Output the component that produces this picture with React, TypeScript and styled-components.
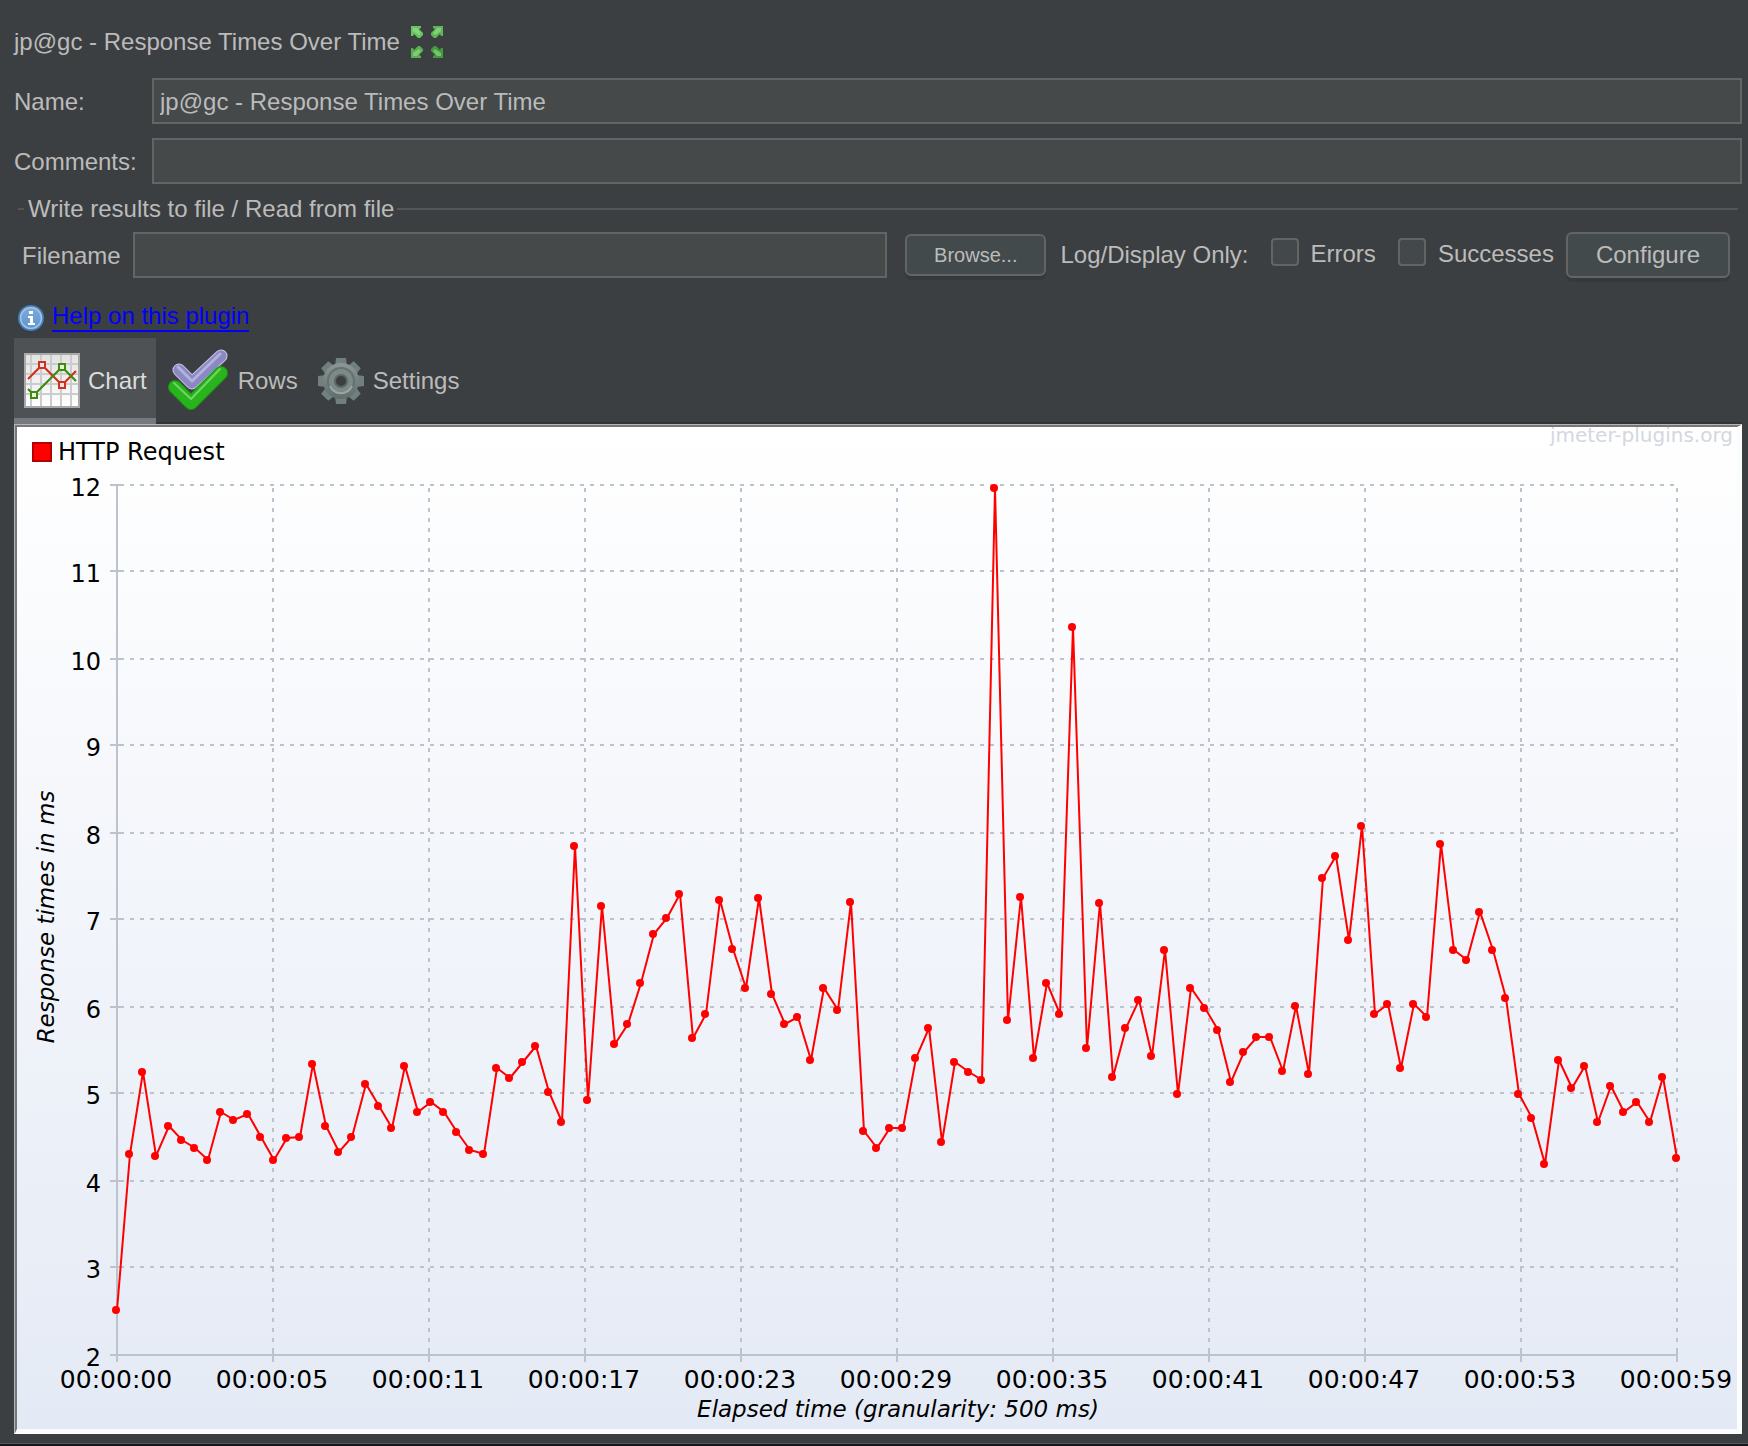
import React, { useState } from "react";
import styled, { createGlobalStyle } from "styled-components";

const GlobalStyle = createGlobalStyle`
  *, *::before, *::after { box-sizing: border-box; }
  body {
    margin: 0;
    background: #3c3f41;
    color: #bbbbbb;
    font-family: "Liberation Sans", Arial, sans-serif;
    font-size: 24px;
    line-height: 28px;
  }
`;

const Page = styled.main`
  min-height: 100vh;
  display: flex;
  flex-direction: column;
  padding: 26px 6px 8px 14px;
  border-bottom: 2px solid #17141d;
  box-shadow: inset 0 -1px 0 #55585a;
`;

const TitleBar = styled.header`
  display: flex;
  align-items: center;
  gap: 11px;
  height: 32px;
  margin-bottom: 20px;
`;

const Title = styled.h1`
  margin: 0;
  font-size: 24px;
  font-weight: 400;
  line-height: 28px;
`;

const IconButton = styled.button`
  display: flex;
  padding: 0;
  border: 0;
  background: none;
`;

const FormRow = styled.div`
  display: grid;
  grid-template-columns: 138px 1fr;
  align-items: center;
  margin-bottom: 14px;
`;

const FieldLabel = styled.label`
  padding-top: 2px;
`;

const TextField = styled.input`
  width: 100%;
  min-width: 0;
  height: 46px;
  padding: 2px 6px 0;
  border: 2px solid #646464;
  border-radius: 0;
  background: #45494a;
  color: #bbbbbb;
  font: inherit;
  outline: none;
`;

const FileGroup = styled.fieldset`
  min-width: 0;
  margin: 0 4px 0 4px;
  padding: 12px 8px 0 4px;
  border: 0;
  border-top: 2px solid #555555;
`;

const GroupTitle = styled.legend`
  margin-left: 2px;
  padding: 0 3px 0 4px;
  line-height: 22px;
`;

const FileRow = styled.div`
  display: flex;
  align-items: center;
  gap: 12px;
  white-space: nowrap;
`;

const FileField = styled(TextField)`
  flex: 1;
  margin-right: 6px;
`;

const Button = styled.button<{ $compact?: boolean }>`
  height: ${(p) => (p.$compact ? 42 : 46)}px;
  padding: 0 ${(p) => (p.$compact ? 27 : 28)}px;
  border: 2px solid #646464;
  border-radius: 6px;
  background: #434a4c;
  box-shadow: 0 4px 0 #36393b;
  color: #bbbbbb;
  font-family: inherit;
  font-size: ${(p) => (p.$compact ? 20 : 24)}px;
`;

const Caption = styled.span`
  margin-left: 2px;
`;

const Check = styled.label`
  display: flex;
  align-items: center;
  gap: 12px;
  margin-left: 10px;
  padding-bottom: 2px;
`;

const CheckBox = styled.input`
  appearance: none;
  width: 28px;
  height: 28px;
  margin: 0 0 4px;
  border: 2px solid #646464;
  border-radius: 4px;
  background: #43494a;
  &:checked { background: #8a9296; }
`;

const HelpRow = styled.div`
  display: flex;
  align-items: center;
  gap: 7px;
  margin: 26px 0 6px 3px;
`;

const HelpLink = styled.a`
  padding-bottom: 2px;
  border-bottom: 2px solid #0000ff;
  color: #0000ff;
  line-height: 24px;
  text-decoration: none;
`;

const TabList = styled.div`
  display: flex;
  height: 86px;
  box-shadow: inset 0 -2px 0 #323537;
`;

const Tab = styled.button<{ $active: boolean }>`
  display: flex;
  align-items: center;
  gap: 8px;
  padding: 0 9px 0 10px;
  border: 0;
  background: ${(p) => (p.$active ? "#4e5254" : "transparent")};
  box-shadow: ${(p) => (p.$active ? "inset 0 -6px 0 #747a80" : "none")};
  color: ${(p) => (p.$active ? "#dcdcdc" : "#bbbbbb")};
  font: inherit;
`;

const Bevel = styled.section`
  border: 1px solid #ffffff;
  border-top-color: #b4b4b4;
  border-left-color: #b4b4b4;
`;

const BevelInner = styled.div`
  border-style: solid;
  border-width: 2px 4px 4px 2px;
  border-color: #777777 #fbfcfe #fbfcfe #777777;
`;

const ChartSvg = styled.svg`
  display: block;
  width: 100%;
  height: auto;
  background: linear-gradient(#ffffff, #e4eaf5);
  font-family: "DejaVu Sans", sans-serif;
  font-size: 24px;
`;

const TimeLabel = styled.text`
  font-size: 25px;
`;

const AxisTitle = styled.text`
  font-size: 23px;
  font-style: italic;
`;

const Watermark = styled.text`
  font-size: 20px;
  fill: #d3d7df;
`;

const RESPONSE_TIMES = [
  2.52, 4.31, 5.25, 4.29, 4.63, 4.47, 4.38, 4.24, 4.79, 4.7, 4.77, 4.51, 4.24, 4.49, 4.51,
  5.34, 4.63, 4.33, 4.51, 5.11, 4.86, 4.61, 5.32, 4.79, 4.91, 4.79, 4.56, 4.36, 4.31, 5.3,
  5.18, 5.37, 5.55, 5.02, 4.68, 7.85, 4.93, 7.16, 5.57, 5.8, 6.28, 6.84, 7.02, 7.3, 5.64,
  5.92, 7.23, 6.67, 6.22, 7.25, 6.15, 5.8, 5.89, 5.39, 6.22, 5.96, 7.21, 4.58, 4.38, 4.61,
  4.61, 5.41, 5.76, 4.45, 5.37, 5.25, 5.16, 11.97, 5.85, 7.27, 5.41, 6.28, 5.92, 10.37, 5.53,
  7.2, 5.2, 5.76, 6.08, 5.44, 6.65, 5.0, 6.22, 5.99, 5.74, 5.14, 5.48, 5.66, 5.66, 5.27,
  6.01, 5.23, 7.48, 7.73, 6.77, 8.08, 5.92, 6.03, 5.3, 6.03, 5.89, 7.87, 6.65, 6.54, 7.09,
  6.65, 6.1, 5.0, 4.72, 4.2, 5.39, 5.07, 5.32, 4.68, 5.09, 4.79, 4.91, 4.68, 5.2, 4.26,
];

const TIME_LABELS = ["00", "05", "11", "17", "23", "29", "35", "41", "47", "53", "59"];
const MS_LABELS = [2, 3, 4, 5, 6, 7, 8, 9, 10, 11, 12];

const PLOT = { left: 100, right: 1660, top: 58, bottom: 928 };
const GRID = "#bcc2ce";

const toX = (i: number) =>
  Math.floor(PLOT.left + (i * (PLOT.right - PLOT.left)) / (RESPONSE_TIMES.length - 1));
const toY = (ms: number) => Math.round(PLOT.bottom - (ms - 2) * 87);
const gridY = (ms: number) => Math.floor(toY(ms) / 2) * 2;

function ResponseChart() {
  const line = RESPONSE_TIMES.map((ms, i) => `${toX(i)},${toY(ms)}`).join(" ");
  return (
    <ChartSvg viewBox="0 0 1720 1002" role="img" aria-label="Response times over time">
      <rect x="16" y="16" width="18" height="18" fill="#ff0000" stroke="#b20000" strokeWidth="2" />
      <text x="41" y="33">HTTP Request</text>
      <Watermark x="1716" y="15" textAnchor="end">jmeter-plugins.org</Watermark>
      <g stroke={GRID} strokeWidth="2">
        {MS_LABELS.map((ms) => (
          <g key={ms}>
            <line x1="93" x2="107" y1={gridY(ms)} y2={gridY(ms)} />
            {ms > 2 && (
              <line x1="103" x2={PLOT.right} y1={gridY(ms)} y2={gridY(ms)} strokeDasharray="4 6" />
            )}
          </g>
        ))}
        {TIME_LABELS.map((t, i) => {
          const x = PLOT.left + i * 156;
          return (
            <g key={t}>
              <line x1={x} x2={x} y1="921" y2="935" />
              {i > 0 && <line x1={x} x2={x} y1="61" y2={PLOT.bottom} strokeDasharray="4 6" />}
            </g>
          );
        })}
        <line x1={PLOT.left} x2={PLOT.left} y1={PLOT.top} y2={PLOT.bottom} />
        <line x1={PLOT.left} x2={PLOT.right} y1={PLOT.bottom} y2={PLOT.bottom} />
      </g>
      {MS_LABELS.map((ms) => (
        <text key={ms} x="84" y={gridY(ms) + 11} textAnchor="end">{ms}</text>
      ))}
      {TIME_LABELS.map((t, i) => (
        <TimeLabel key={t} x={PLOT.left - 1 + i * 156} y="961" textAnchor="middle">{`00:00:${t}`}</TimeLabel>
      ))}
      <AxisTitle x="881" y="990" textAnchor="middle">Elapsed time (granularity: 500 ms)</AxisTitle>
      <AxisTitle transform="translate(37 490) rotate(-90)" textAnchor="middle">Response times in ms</AxisTitle>
      <polyline points={line} fill="none" stroke="#ff0000" strokeWidth="2" />
      <g fill="#ff0000">
        {RESPONSE_TIMES.map((ms, i) => (
          <circle key={i} cx={toX(i) - 1} cy={toY(ms)} r="4" />
        ))}
      </g>
    </ChartSvg>
  );
}

const ARROW = "M0 0H5V1L4 1.5L6 3.5V4.5L4.5 6H3.5L1.5 4L1 5H0Z";

function ExpandIcon() {
  return (
    <svg width="32" height="32" viewBox="0 0 16 16" aria-hidden="true">
      {[
        ["", "#67c45f"],
        ["translate(16 0) scale(-1 1)", "#5cb655"],
        ["translate(0 16) scale(1 -1)", "#57b04f"],
        ["translate(16 16) scale(-1 -1)", "#429c3d"],
      ].map(([transform, fill]) => (
        <g key={transform} transform={transform}>
          <path d={ARROW} fill={fill} />
          <path d="M1 1H3L5 3.5L4 4.5L1 2.5Z" fill="#a4e09a" opacity="0.55" />
        </g>
      ))}
    </svg>
  );
}

function InfoIcon() {
  return (
    <svg width="28" height="28" viewBox="0 0 28 28" aria-hidden="true">
      <defs>
        <linearGradient id="info" x1="0" y1="0" x2="0" y2="1">
          <stop offset="0" stopColor="#7fa9d8" />
          <stop offset="1" stopColor="#5f96cf" />
        </linearGradient>
      </defs>
      <circle cx="14" cy="14" r="13" fill="#3f7fbd" />
      <circle cx="14" cy="14" r="10.5" fill="url(#info)" stroke="#a4c3e2" strokeWidth="1.6" />
      <path d="M12 7h4v3h-4zM11 12h5v7h2v2h-7v-2h2v-5h-2z" fill="#ffffff" />
    </svg>
  );
}

function ChartIcon() {
  return (
    <svg width="56" height="56" viewBox="0 0 56 56" aria-hidden="true">
      <defs>
        <linearGradient id="paper" x1="0" y1="0" x2="0" y2="1">
          <stop offset="0" stopColor="#e2e2e2" />
          <stop offset="1" stopColor="#ffffff" />
        </linearGradient>
      </defs>
      <rect x="1" y="1" width="54" height="53" fill="url(#paper)" stroke="#a9a9a9" strokeWidth="2" />
      <path d="M7 2V53M17 2V53M27 2V53M37 2V53M47 2V53M2 11H54M2 21H54M2 31H54M2 41H54" stroke="#cccccc" strokeWidth="2" />
      <path d="M4 26L18 12L38 32L52 18" fill="none" stroke="#d03020" strokeWidth="2.2" />
      <path d="M4 36L10 42L38 14L52 28" fill="none" stroke="#3f8a10" strokeWidth="2.2" />
      <g fill="#fde4e0" stroke="#d03020" strokeWidth="2">
        <rect x="15" y="9" width="6" height="6" />
        <rect x="35" y="29" width="6" height="6" />
      </g>
      <g fill="#e2fbd0" stroke="#3f8a10" strokeWidth="2">
        <rect x="7" y="39" width="6" height="6" />
        <rect x="35" y="11" width="6" height="6" />
      </g>
    </svg>
  );
}

function RowsIcon() {
  const purple = "M13 21L26 34L55 7";
  const green = "M9 38L25 54L55 24";
  return (
    <svg width="64" height="64" viewBox="0 0 64 64" fill="none" strokeLinecap="round" strokeLinejoin="round" aria-hidden="true">
      <path d={purple} stroke="#c6c4ea" strokeWidth="13" />
      <path d={purple} stroke="#8b89c2" strokeWidth="11" />
      <path d="M12 18L26 32L54 5" stroke="#b3b1de" strokeWidth="3" />
      <path d={green} stroke="#1a9812" strokeWidth="14" />
      <path d={green} stroke="#29b31c" strokeWidth="12" />
      <path d="M8 34L25 50L54 20" stroke="#6fd860" strokeWidth="2" />
    </svg>
  );
}

function GearIcon() {
  return (
    <svg width="48" height="48" viewBox="-24 -24 48 48" aria-hidden="true">
      <defs>
        <linearGradient id="steel" x1="0" y1="0" x2="0" y2="1">
          <stop offset="0" stopColor="#8b9795" />
          <stop offset="1" stopColor="#5f6e6c" />
        </linearGradient>
      </defs>
      {[0, 45, 90, 135, 180, 225, 270, 315].map((a) => (
        <path key={a} d="M-6 -15L-5 -23H5L6 -15Z" fill="#71807e" transform={`rotate(${a})`} />
      ))}
      <circle r="18" fill="url(#steel)" />
      <circle r="13" fill="#7d8986" stroke="#64716f" strokeWidth="2" />
      <path d="M-11 5A12 12 0 0 0 11 5" fill="none" stroke="#9aa6a3" strokeWidth="2" />
      <circle r="6" fill="#3c3f41" stroke="#5a6765" strokeWidth="2" />
    </svg>
  );
}

const TABS = [
  { name: "Chart", Icon: ChartIcon },
  { name: "Rows", Icon: RowsIcon },
  { name: "Settings", Icon: GearIcon },
];

export default function App() {
  const [active, setActive] = useState("Chart");
  return (
    <>
      <GlobalStyle />
      <Page>
        <TitleBar>
          <Title>jp@gc - Response Times Over Time</Title>
          <IconButton type="button" aria-label="Maximize"><ExpandIcon /></IconButton>
        </TitleBar>
        <FormRow>
          <FieldLabel htmlFor="name">Name:</FieldLabel>
          <TextField id="name" type="text" defaultValue="jp@gc - Response Times Over Time" />
        </FormRow>
        <FormRow>
          <FieldLabel htmlFor="comments">Comments:</FieldLabel>
          <TextField id="comments" type="text" />
        </FormRow>
        <FileGroup>
          <GroupTitle>Write results to file / Read from file</GroupTitle>
          <FileRow>
            <FieldLabel htmlFor="filename">Filename</FieldLabel>
            <FileField id="filename" type="text" />
            <Button type="button" $compact>Browse...</Button>
            <Caption>Log/Display Only:</Caption>
            <Check><CheckBox type="checkbox" />Errors</Check>
            <Check><CheckBox type="checkbox" />Successes</Check>
            <Button type="button">Configure</Button>
          </FileRow>
        </FileGroup>
        <HelpRow>
          <InfoIcon />
          <HelpLink href="#help">Help on this plugin</HelpLink>
        </HelpRow>
        <TabList role="tablist">
          {TABS.map(({ name, Icon }) => (
            <Tab
              key={name}
              type="button"
              role="tab"
              aria-selected={active === name}
              $active={active === name}
              onClick={() => setActive(name)}
            >
              <Icon />
              {name}
            </Tab>
          ))}
        </TabList>
        <Bevel>
          <BevelInner>
            <ResponseChart />
          </BevelInner>
        </Bevel>
      </Page>
    </>
  );
}
